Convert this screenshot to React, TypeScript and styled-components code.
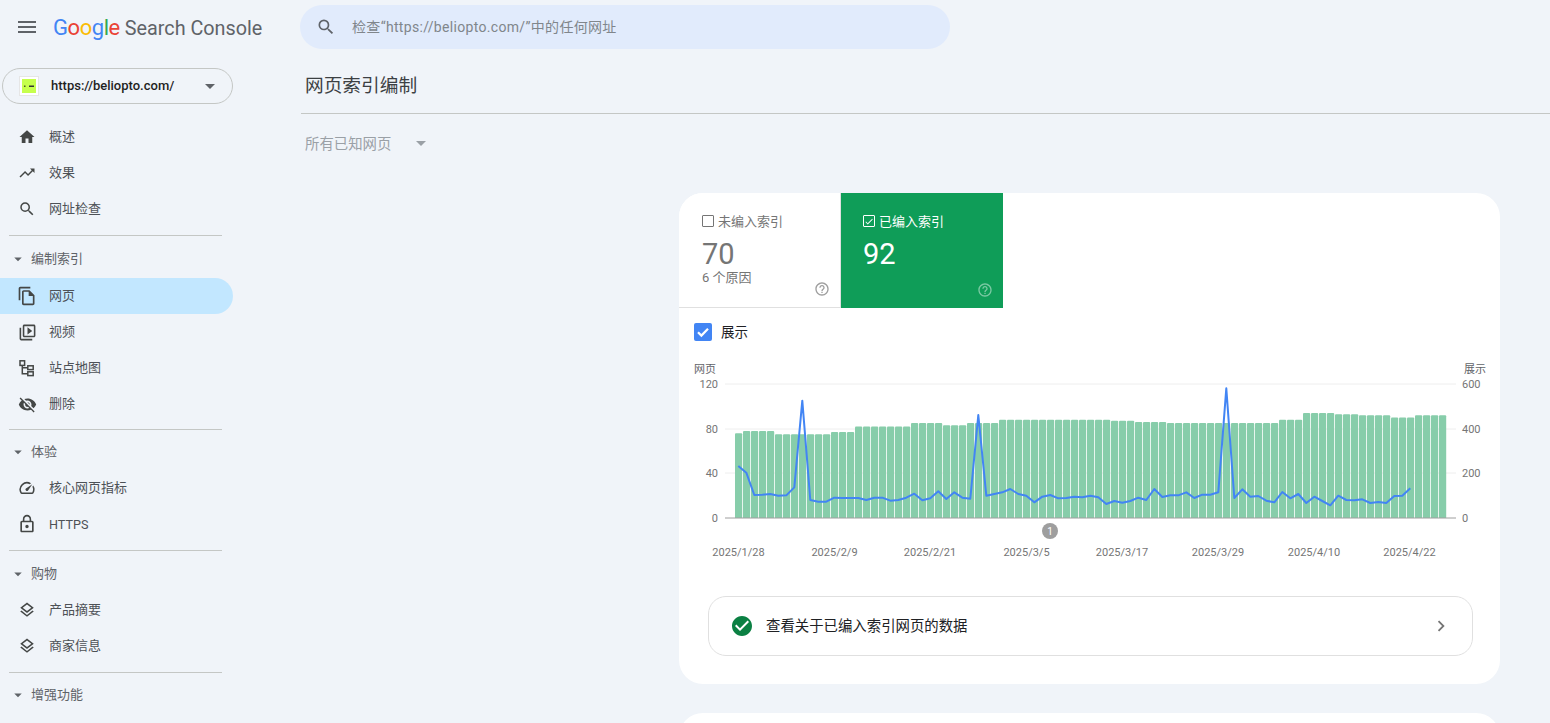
import React from 'react';
import styled, { createGlobalStyle } from 'styled-components';
import {
  MdMenu,
  MdSearch,
  MdArrowDropDown,
  MdHome,
  MdTrendingUp,
  MdOutlineFileCopy,
  MdOutlineVideoLibrary,
  MdVisibilityOff,
  MdSpeed,
  MdLockOutline,
  MdOutlineLayers,
  MdHelpOutline,
  MdCheck,
  MdCheckCircle,
  MdChevronRight,
} from 'react-icons/md';

const CHART_WIDTH = 792;
const CHART_HEIGHT = 200;
const CHART_TOP = 362;
const CHART_LEFT = 694;
const AXIS_Y = 518 - CHART_TOP;
const PLOT_HEIGHT = 134;

const barRuns: [number, number][] = [
  [76, 1], [78, 4], [75, 7], [77, 3], [82, 7], [85, 4], [83, 3], [85, 4], [88, 14],
  [87, 3], [86, 4], [85, 14], [88, 3], [94, 4], [93, 3], [92, 4], [90, 3], [92, 4],
];
const bars = barRuns.flatMap(([value, count]) => Array<number>(count).fill(value));

// screen offsets of the impressions line, 1/3 px
const lineRaw = [
  318, 338, 405, 404, 402, 407, 406, 382, 122, 420, 425, 425, 413, 414, 414, 414, 420, 413, 413,
  422, 420, 413, 401, 421, 415, 394, 417, 397, 413, 416, 165, 407, 402, 397, 387, 402, 407, 427,
  410, 405, 415, 414, 410, 412, 407, 412, 432, 423, 428, 423, 413, 420, 387, 411, 406, 406, 397,
  414, 404, 404, 397, 85, 414, 388, 410, 408, 422, 427, 396, 415, 402, 429, 410, 423, 436, 407,
  420, 421, 418, 429, 426, 429, 408, 407, 385,
];
const linePoints = lineRaw
  .map((raw, i) => `${738.3 - CHART_LEFT + 8 * i},${360 + raw / 3 - CHART_TOP}`)
  .join(' ');

const leftTicks = [
  { label: '120', y: 384 },
  { label: '80', y: 429 },
  { label: '40', y: 473 },
  { label: '0', y: 518 },
];
const rightTicks = ['600', '400', '200', '0'];
const dates = [
  { label: '2025/1/28', x: 738.5 },
  { label: '2025/2/9', x: 834.5 },
  { label: '2025/2/21', x: 930 },
  { label: '2025/3/5', x: 1026.5 },
  { label: '2025/3/17', x: 1122 },
  { label: '2025/3/29', x: 1218 },
  { label: '2025/4/10', x: 1314 },
  { label: '2025/4/22', x: 1409.5 },
];

const SitemapIcon = () => (
  <svg width="18" height="18" viewBox="0 0 18 18" fill="none" stroke="currentColor" strokeWidth="1.5">
    <rect x="2" y="1.8" width="4.6" height="4.6" />
    <rect x="9.8" y="6.8" width="5.4" height="3.8" />
    <rect x="9.8" y="12.8" width="5.4" height="3.8" />
    <path d="M4.3 6.4V14.7H9.8M4.3 8.7H9.8" />
  </svg>
);

const Favicon = () => (
  <FaviconBox>
    <svg width="14" height="14" viewBox="0 0 14 14">
      <rect width="14" height="14" fill="#c6ff4d" />
      <rect x="2" y="6.5" width="1.5" height="1.5" fill="#4a5a20" />
      <rect x="7" y="6.5" width="5" height="1.5" fill="#333" />
    </svg>
  </FaviconBox>
);

const Item = ({
  icon,
  label,
  active,
  latin,
}: {
  icon: React.ReactNode;
  label: string;
  active?: boolean;
  latin?: boolean;
}) => (
  <NavItem $active={active}>
    <NavIcon>{icon}</NavIcon>
    <NavLabel $latin={latin}>{label}</NavLabel>
  </NavItem>
);

const Section = ({ label, top }: { label: string; top: number }) => (
  <SectionTitle $top={top}>
    <MdArrowDropDown size={18} />
    <NavLabel>{label}</NavLabel>
  </SectionTitle>
);

export default function App() {
  return (
    <Page>
      <GlobalStyle />
      <Header>
        <BrandArea>
          <MenuButton>
            <MdMenu size={24} />
          </MenuButton>
          <Logo>
            <LogoWord>
              <LogoLetter $color="#4285f4">G</LogoLetter>
              <LogoLetter $color="#ea4335">o</LogoLetter>
              <LogoLetter $color="#fbbc05">o</LogoLetter>
              <LogoLetter $color="#4285f4">g</LogoLetter>
              <LogoLetter $color="#34a853">l</LogoLetter>
              <LogoLetter $color="#ea4335">e</LogoLetter>
            </LogoWord>
            <LogoProduct>Search Console</LogoProduct>
          </Logo>
        </BrandArea>
        <SearchBar>
          <MdSearch size={20} />
          <SearchText>检查“https://beliopto.com/”中的任何网址</SearchText>
        </SearchBar>
      </Header>

      <Body>
        <Sidebar>
          <PropertySelect>
            <Favicon />
            <PropertyUrl>https://beliopto.com/</PropertyUrl>
            <MdArrowDropDown size={24} />
          </PropertySelect>

          <NavGroup $top={15}>
            <Item icon={<MdHome size={18} />} label="概述" />
            <Item icon={<MdTrendingUp size={18} />} label="效果" />
            <Item icon={<MdSearch size={18} />} label="网址检查" />
          </NavGroup>
          <Divider $top={8} />

          <Section label="编制索引" top={11} />
          <NavGroup $top={7}>
            <Item active icon={<MdOutlineFileCopy size={20} />} label="网页" />
            <Item icon={<MdOutlineVideoLibrary size={19} />} label="视频" />
            <Item icon={<SitemapIcon />} label="站点地图" />
            <Item icon={<MdVisibilityOff size={19} />} label="删除" />
          </NavGroup>
          <Divider $top={7} />

          <Section label="体验" top={10} />
          <NavGroup $top={6}>
            <Item icon={<MdSpeed size={18} />} label="核心网页指标" />
            <Item latin icon={<MdLockOutline size={20} />} label="HTTPS" />
          </NavGroup>
          <Divider $top={8} />

          <Section label="购物" top={11} />
          <NavGroup $top={6}>
            <Item icon={<MdOutlineLayers size={18} />} label="产品摘要" />
            <Item icon={<MdOutlineLayers size={18} />} label="商家信息" />
          </NavGroup>
          <Divider $top={8} />

          <Section label="增强功能" top={10} />
        </Sidebar>

        <Main>
          <TitleBar>
            <Title>网页索引编制</Title>
          </TitleBar>
          <FilterRow>
            <FilterLabel>所有已知网页</FilterLabel>
            <MdArrowDropDown size={24} />
          </FilterRow>

          <Card>
            <Tabs>
              <Tab>
                <TabLabel>
                  <TabCheck />
                  未编入索引
                </TabLabel>
                <TabNumber>70</TabNumber>
                <TabNote>6 个原因</TabNote>
                <TabHelp>
                  <MdHelpOutline size={16} />
                </TabHelp>
              </Tab>
              <Tab $selected>
                <TabLabel>
                  <TabCheck $checked>
                    <MdCheck size={11} />
                  </TabCheck>
                  已编入索引
                </TabLabel>
                <TabNumber>92</TabNumber>
                <TabHelp $light>
                  <MdHelpOutline size={16} />
                </TabHelp>
              </Tab>
            </Tabs>

            <ShowRow>
              <BlueCheck>
                <svg width="14" height="14" viewBox="0 0 14 14" fill="none" stroke="currentColor" strokeWidth="2.2">
                  <path d="M2 7.2l3.4 3.4L12 3.8" />
                </svg>
              </BlueCheck>
              <ShowLabel>展示</ShowLabel>
            </ShowRow>

            <Chart width={CHART_WIDTH} height={CHART_HEIGHT} viewBox={`0 0 ${CHART_WIDTH} ${CHART_HEIGHT}`}>
              <AxisCaption x={0} y={7}>网页</AxisCaption>
              <AxisCaption x={CHART_WIDTH} y={7} textAnchor="end">展示</AxisCaption>
              {leftTicks.map((tick, i) => (
                <g key={tick.label}>
                  {i < 3 && (
                    <line x1={31} x2={762} y1={tick.y - CHART_TOP} y2={tick.y - CHART_TOP} stroke="#eeeeee" />
                  )}
                  <AxisText x={24} y={tick.y - CHART_TOP} textAnchor="end">{tick.label}</AxisText>
                  <AxisText x={768} y={tick.y - CHART_TOP}>{rightTicks[i]}</AxisText>
                </g>
              ))}
              {bars.map((value, i) => {
                const h = (value * PLOT_HEIGHT) / 120;
                return (
                  <path
                    key={i}
                    d={`M${41 + 8 * i} ${AXIS_Y}v${-h + 1}q0 -1 1 -1h5.2q1 0 1 1v${h - 1}z`}
                    fill="#87cdaa"
                  />
                );
              })}
              <line x1={31} x2={762} y1={AXIS_Y} y2={AXIS_Y} stroke="#9e9e9e" />
              <polyline points={linePoints} fill="none" stroke="#4285f4" strokeWidth="2" strokeLinejoin="round" />
              <circle cx={356} cy={169} r={8} fill="#9e9e9e" />
              <MarkerText x={356} y={169.5}>1</MarkerText>
              {dates.map((d) => (
                <AxisText key={d.label} x={d.x - CHART_LEFT} y={190} textAnchor="middle">
                  {d.label}
                </AxisText>
              ))}
            </Chart>

            <DetailRow>
              <DetailIcon>
                <MdCheckCircle size={24} />
              </DetailIcon>
              <DetailText>查看关于已编入索引网页的数据</DetailText>
              <DetailArrow>
                <MdChevronRight size={22} />
              </DetailArrow>
            </DetailRow>
          </Card>

          <NextCard />
        </Main>
      </Body>
    </Page>
  );
}

const GlobalStyle = createGlobalStyle`
  html, body {
    margin: 0;
    height: 100%;
    overflow: hidden;
    background: #f0f4f9;
  }
  body {
    font-family: Roboto, "Noto Sans CJK SC", sans-serif;
  }
`;

const Page = styled.div`
  height: 723px;
  overflow: hidden;
  background: #f0f4f9;
`;

const Header = styled.header`
  display: flex;
  align-items: center;
  height: 44px;
  padding-top: 5px;
`;

const BrandArea = styled.div`
  display: flex;
  align-items: center;
  width: 300px;
  flex-shrink: 0;
  padding-left: 15px;
  box-sizing: border-box;
`;

const MenuButton = styled.div`
  display: flex;
  color: #5f6368;
`;

const Logo = styled.div`
  display: flex;
  align-items: baseline;
  gap: 5px;
  margin-left: 14px;
  line-height: 28px;
  margin-top: 2px;
`;

const LogoWord = styled.span`
  font-size: 22px;
  letter-spacing: -0.45px;
`;

const LogoLetter = styled.span<{ $color: string }>`
  color: ${(p) => p.$color};
`;

const LogoProduct = styled.span`
  font-size: 19.8px;
  color: #5f6368;
`;

const SearchBar = styled.div`
  display: flex;
  align-items: center;
  gap: 16px;
  width: 650px;
  height: 44px;
  padding-left: 16px;
  box-sizing: border-box;
  border-radius: 22px;
  background: #e1ebfc;
  color: #5f6368;
`;

const SearchText = styled.span`
  padding-bottom: 2px;
  font-size: 14px;
  letter-spacing: 0.32px;
  color: #80868b;
`;

const Body = styled.div`
  display: flex;
`;

const Sidebar = styled.nav`
  width: 233px;
  flex-shrink: 0;
  padding-top: 19px;
`;

const PropertySelect = styled.div`
  display: flex;
  align-items: center;
  width: 231px;
  height: 36px;
  margin-left: 2px;
  padding: 0 10px 0 16px;
  box-sizing: border-box;
  border: 1px solid #c4c7c5;
  border-radius: 18px;
  color: #5f6368;
`;

const FaviconBox = styled.div`
  display: flex;
  align-items: center;
  justify-content: center;
  width: 20px;
  height: 20px;
  flex-shrink: 0;
  background: #fff;
  border: 1px solid #e6e6e6;
  box-sizing: border-box;
`;

const PropertyUrl = styled.span`
  flex: 1;
  margin-left: 12px;
  padding-bottom: 2px;
  font-size: 13px;
  font-weight: 500;
  color: #1f1f1f;
`;

const NavGroup = styled.div<{ $top: number }>`
  display: flex;
  flex-direction: column;
  margin-top: ${(p) => p.$top}px;
`;

const Divider = styled.div<{ $top: number }>`
  height: 1px;
  margin: ${(p) => p.$top}px 11px 0 9px;
  background: #c4c7c5;
`;

const NavItem = styled.div<{ $active?: boolean }>`
  display: flex;
  align-items: center;
  height: 36px;
  padding-left: 16px;
  font-size: 13px;
  color: #4d5156;
  border-radius: 0 18px 18px 0;
  background: ${(p) => (p.$active ? '#c2e7ff' : 'transparent')};
`;

const NavIcon = styled.span`
  display: flex;
  align-items: center;
  justify-content: center;
  width: 22px;
  margin-right: 11px;
  color: #444746;
`;

const NavLabel = styled.span<{ $latin?: boolean }>`
  padding-bottom: ${(p) => (p.$latin ? '0' : '3px')};
  font-size: ${(p) => (p.$latin ? '12.6px' : '13px')};
`;

const SectionTitle = styled.div<{ $top: number }>`
  display: flex;
  align-items: center;
  height: 24px;
  margin-top: ${(p) => p.$top}px;
  padding-left: 9px;
  gap: 4px;
  font-size: 13px;
  color: #5f6368;
`;

const Main = styled.main`
  flex: 1;
  min-width: 0;
  margin-left: 68px;
`;

const TitleBar = styled.div`
  height: 65px;
  padding: 25px 0 0 4px;
  box-sizing: border-box;
  border-bottom: 1px solid #c4c7c5;
`;

const Title = styled.h1`
  margin: 0;
  font-size: 18.7px;
  font-weight: 400;
  line-height: 24px;
  color: #3c4043;
`;

const FilterRow = styled.div`
  display: flex;
  align-items: center;
  gap: 18px;
  height: 24px;
  margin: 17px 0 38px 4px;
  font-size: 14.4px;
  color: #9aa0a6;
`;

const FilterLabel = styled.span`
  padding-bottom: 2px;
`;

const Card = styled.section`
  width: 821px;
  height: 491px;
  margin-left: 378px;
  box-sizing: border-box;
  border-radius: 24px;
  background: #fff;
  overflow: hidden;
`;

const NextCard = styled(Card)`
  margin-top: 29px;
`;

const Tabs = styled.div`
  display: flex;
  height: 115px;
`;

const Tab = styled.div<{ $selected?: boolean }>`
  position: relative;
  width: 162px;
  padding: 19px 0 0 ${(p) => (p.$selected ? '22px' : '23px')};
  box-sizing: border-box;
  color: ${(p) => (p.$selected ? '#fff' : '#757575')};
  background: ${(p) => (p.$selected ? '#0f9d58' : '#fff')};
  border-bottom: ${(p) => (p.$selected ? '0' : '1px solid #e0e0e0')};
  border-right: ${(p) => (p.$selected ? '0' : '1px solid #e0e0e0')};
`;

const TabLabel = styled.div`
  display: flex;
  align-items: center;
  gap: 4px;
  height: 16px;
  font-size: 13px;
`;

const TabCheck = styled.span<{ $checked?: boolean }>`
  display: flex;
  align-items: center;
  justify-content: center;
  width: 12px;
  height: 12px;
  margin-top: 2px;
  box-sizing: border-box;
  border: 1px solid ${(p) => (p.$checked ? '#fff' : '#757575')};
  border-radius: 1px;
`;

const TabNumber = styled.div`
  margin-top: 10px;
  font-size: 29px;
  line-height: 32px;
`;

const TabNote = styled.div`
  font-size: 13px;
  line-height: 16px;
`;

const TabHelp = styled.span<{ $light?: boolean }>`
  position: absolute;
  right: 10px;
  bottom: 10px;
  display: flex;
  color: ${(p) => (p.$light ? 'rgba(255, 255, 255, 0.45)' : '#9e9e9e')};
`;

const ShowRow = styled.div`
  display: flex;
  align-items: center;
  gap: 9px;
  height: 18px;
  margin: 15px 0 0 15px;
  font-size: 13.5px;
  color: #202124;
`;

const ShowLabel = styled.span`
  padding-bottom: 2px;
`;

const BlueCheck = styled.span`
  display: flex;
  align-items: center;
  justify-content: center;
  width: 18px;
  height: 18px;
  border-radius: 2px;
  background: #4285f4;
  color: #fff;
`;

const Chart = styled.svg`
  display: block;
  margin: 21px 0 0 15px;
`;

const AxisText = styled.text`
  font-size: 11px;
  fill: #757575;
  dominant-baseline: central;
`;

const AxisCaption = styled(AxisText)`
  fill: #5f6368;
`;

const MarkerText = styled.text`
  font-size: 10px;
  fill: #fff;
  text-anchor: middle;
  dominant-baseline: central;
`;

const DetailRow = styled.div`
  display: flex;
  align-items: center;
  height: 60px;
  margin: 34px 27px 0 29px;
  padding: 0 20px 0 21px;
  box-sizing: border-box;
  border: 1px solid #e0e0e0;
  border-radius: 18px;
`;

const DetailIcon = styled.span`
  display: flex;
  color: #0b8043;
`;

const DetailText = styled.span`
  flex: 1;
  margin-left: 12px;
  padding-bottom: 4px;
  font-size: 14.4px;
  color: #202124;
`;

const DetailArrow = styled.span`
  display: flex;
  color: #757575;
`;
